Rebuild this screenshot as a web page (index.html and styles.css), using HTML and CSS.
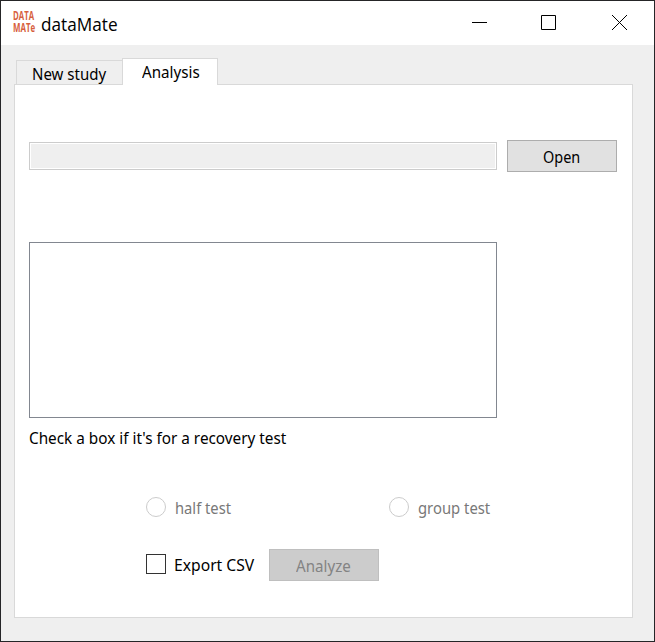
FILE: index.html
```html
<!DOCTYPE html>
<html lang="en">
<head>
<meta charset="utf-8">
<title>dataMate</title>
<link rel="stylesheet" href="styles.css">
</head>
<body>
<div class="window">
  <header class="titlebar">
    <div class="logo"><span class="logo-top">DATA</span><span class="logo-bottom">MATe</span></div>
    <h1 class="title"><span class="t name">dataMate</span></h1>
    <svg class="controls" width="156" height="16" viewBox="0 0 156 16">
      <path d="M0 7.500h15M69.500 .5h14v14h-14z"/>
      <path class="close" d="M140 0l15 15M155 0l-15 15"/>
    </svg>
  </header>
  <nav class="tabs">
    <div class="tab"><span class="t new-study">New study</span></div>
    <div class="tab active"><span class="t analysis">Analysis</span></div>
  </nav>
  <main class="pane">
    <div class="file-row">
      <div class="field"></div>
      <button class="button"><span class="t open">Open</span></button>
    </div>
    <div class="list"></div>
    <p class="hint"><span class="t hint-text">Check a box if it's for a recovery test</span></p>
    <div class="radios">
      <label class="choice disabled"><i class="radio"></i><span class="t half">half test</span></label>
      <label class="choice disabled"><i class="radio"></i><span class="t group">group test</span></label>
    </div>
    <div class="actions">
      <label class="choice export"><i class="check"></i><span class="t csv">Export CSV</span></label>
      <button class="button off" disabled><span class="t analyze">Analyze</span></button>
    </div>
  </main>
</div>
</body>
</html>
```
FILE: styles.css
```css
* { box-sizing: border-box; }
body { margin: 0; font: 17px/22px "Noto Sans", sans-serif; color: #000; }
.window { width: 655px; height: 642px; border: 1px solid #252527; background: #efefef; }
.titlebar { display: flex; height: 44px; background: #fff; padding-left: 11px; }
.logo { flex: none; width: 24px; margin-top: 8px; color: #d75f3e; font: bold 13px/12px "Open Sans", sans-serif; white-space: nowrap; }
.logo span { display: block; width: max-content; transform-origin: left; margin-left: 1px; }
.logo-top { transform: scaleX(.6); }
.logo-bottom { transform: scaleX(.61); }
.title { flex: none; margin: 11px 0 0 5px; width: 431px; font: 18px/24px "Open Sans", sans-serif; }
.controls { flex: none; margin: 14px 0 0; fill: none; stroke: #000; stroke-width: 1; }
.tabs { display: flex; align-items: flex-end; height: 40px; margin-left: 15px; margin-bottom: -1px; position: relative; z-index: 1; padding-bottom: 1px; }
.tab { width: 106px; height: 24px; border: 1px solid #d9d9d9; border-width: 1px 0 0 1px; padding: 2px 0 0 15px; white-space: nowrap; }
.tab.active { width: 96px; height: 27px; margin-bottom: -1px; background: #fff; border-right-width: 1px; padding: 2px 0 0 19px; }
.t { display: inline-block; white-space: nowrap; transform-origin: left; }
.name { transform: scaleX(.955); }
.new-study { transform: scaleX(.883); }
.analysis { transform: scaleX(.893); }
.open { transform: scaleX(.85); }
.hint-text { transform: scaleX(.9); }
.half { transform: scaleX(.866); }
.group { transform: scaleX(.872); }
.csv { transform: scaleX(.922); }
.analyze { transform: scaleX(.89); }
.pane { width: 619px; height: 534px; margin-left: 13px; background: #fff; border: 1px solid #d9d9d9; padding: 55px 14px 0; }
.file-row { display: flex; align-items: center; gap: 10px; height: 32px; }
.field { width: 468px; height: 28px; border: 1px solid #ccc; box-shadow: inset 0 0 0 1px #fff; background: #efefef; }
.button { width: 110px; height: 32px; padding: 1px 0 0 35px; border: 1px solid #adadad; background: #e1e1e1; font: inherit; text-align: left; color: #000; }
.button.off { background: #ccc; border-color: #bfbfbf; color: #838383; padding: 1px 0 0 26px; }
.list { width: 468px; height: 176px; margin-top: 70px; border: 1px solid #828790; }
.hint { margin: 9px 0 0; height: 22px; }
.radios { display: flex; margin: 48px 0 0 117px; height: 20px; }
.choice { flex: none; display: flex; align-items: center; width: 243px; height: 20px; gap: 9px; }
.radios .t { margin-top: 1px; }
.disabled { color: #787878; }
.radio { width: 20px; height: 20px; border: 1px solid #ccc; border-radius: 50%; }
.check { width: 20px; height: 20px; border: 1px solid #333; }
.actions { display: flex; align-items: center; margin: 32px 0 0 117px; height: 32px; }
.export { width: 123px; gap: 8px; margin-bottom: 2px; }
.csv { margin-top: 2px; }
```
